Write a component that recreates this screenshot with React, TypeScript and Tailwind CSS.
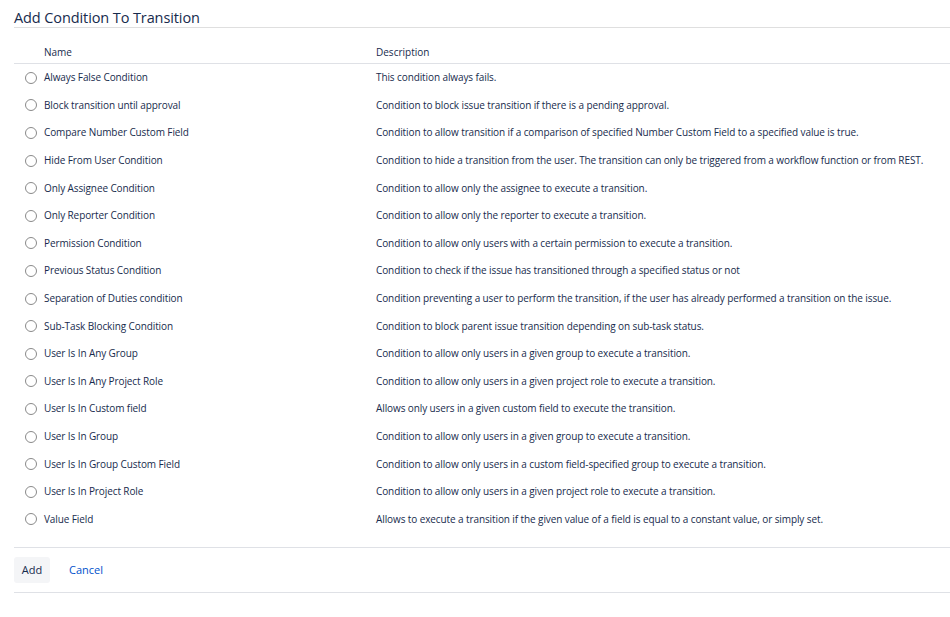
const conditions: [string, string][] = [
  ["Always False Condition", "This condition always fails."],
  ["Block transition until approval", "Condition to block issue transition if there is a pending approval."],
  ["Compare Number Custom Field", "Condition to allow transition if a comparison of specified Number Custom Field to a specified value is true."],
  ["Hide From User Condition", "Condition to hide a transition from the user. The transition can only be triggered from a workflow function or from REST."],
  ["Only Assignee Condition", "Condition to allow only the assignee to execute a transition."],
  ["Only Reporter Condition", "Condition to allow only the reporter to execute a transition."],
  ["Permission Condition", "Condition to allow only users with a certain permission to execute a transition."],
  ["Previous Status Condition", "Condition to check if the issue has transitioned through a specified status or not"],
  ["Separation of Duties condition", "Condition preventing a user to perform the transition, if the user has already performed a transition on the issue."],
  ["Sub-Task Blocking Condition", "Condition to block parent issue transition depending on sub-task status."],
  ["User Is In Any Group", "Condition to allow only users in a given group to execute a transition."],
  ["User Is In Any Project Role", "Condition to allow only users in a given project role to execute a transition."],
  ["User Is In Custom field", "Allows only users in a given custom field to execute the transition."],
  ["User Is In Group", "Condition to allow only users in a given group to execute a transition."],
  ["User Is In Group Custom Field", "Condition to allow only users in a custom field-specified group to execute a transition."],
  ["User Is In Project Role", "Condition to allow only users in a given project role to execute a transition."],
  ["Value Field", "Allows to execute a transition if the given value of a field is equal to a constant value, or simply set."],
];

export default function App() {
  return (
    <div className="min-h-[617px] w-[950px] bg-white pl-[14px] text-[#172b4d] font-['Open_Sans',sans-serif]">
      <h2 className="h-[28px] border-b border-[#dfdfdf] pt-[9px] text-[14.5px] leading-[18px] tracking-[-0.1px]">
        Add Condition To Transition
      </h2>
      <div className="mt-[15px] flex h-[21px] items-center border-b border-[#dfe1e6] pb-[1px] text-[10px] font-medium">
        <div className="w-[362px] pl-[30px]">Name</div>
        <div>Description</div>
      </div>
      <div>
        {conditions.map(([name, desc]) => (
          <label key={name} className="flex h-[27.6px] items-center text-[10px] tracking-[-0.1px]">
            <span className="ml-[11px] mr-[7px] h-[12px] w-[12px] rounded-full border border-[#8a8a8a] bg-white" />
            <span className="w-[332px]">{name}</span>
            <span>{desc}</span>
          </label>
        ))}
      </div>
      <div className="mt-[14px] flex h-[46px] items-center gap-[19px] border-y border-[#dfe1e6]">
        <button className="h-[26px] w-[36px] rounded-[3px] bg-[#f4f5f7] text-[11px] text-[#172b4d]">Add</button>
        <a className="text-[11px] text-[#0052cc]">Cancel</a>
      </div>
    </div>
  );
}
